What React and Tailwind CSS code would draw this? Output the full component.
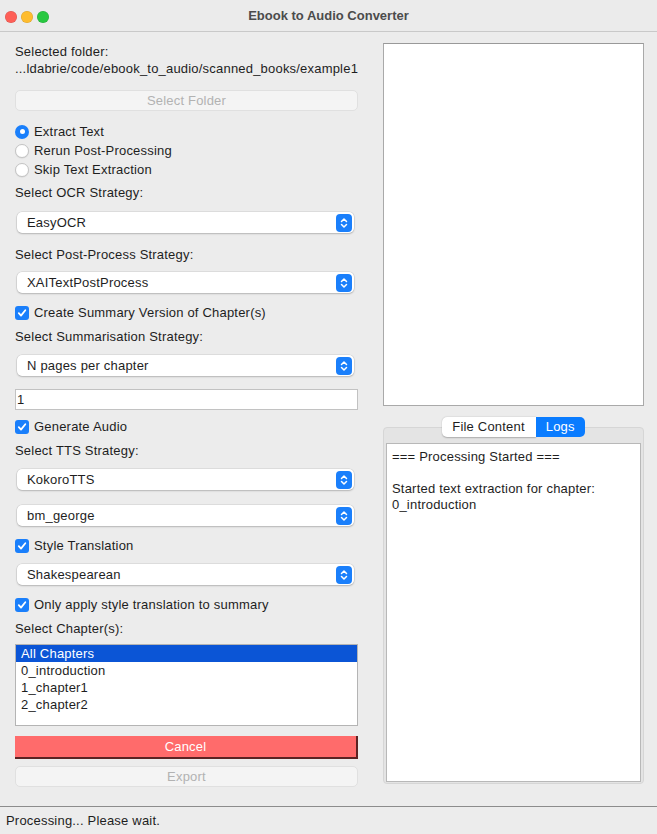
import React from "react";

const font = { fontFamily: '"Liberation Sans", Arial, sans-serif' };

function Stepper() {
  return (
    <div className="flex h-[18px] w-[16px] items-center justify-center rounded-[4px] bg-[#1a7ffb]">
      <svg width="8" height="12" viewBox="0 0 8 12" fill="none">
        <path d="M1.5 4.5 L4 2 L6.5 4.5" stroke="white" strokeWidth="1.5" strokeLinecap="round" strokeLinejoin="round" />
        <path d="M1.5 7.5 L4 10 L6.5 7.5" stroke="white" strokeWidth="1.5" strokeLinecap="round" strokeLinejoin="round" />
      </svg>
    </div>
  );
}

function Select({ value, className = "" }) {
  return (
    <div
      className={`ml-[2px] mr-[4px] flex h-[21px] items-center justify-between rounded-[5px] bg-white pl-[10px] pr-[2px] shadow-[0_0_0_0.5px_rgba(0,0,0,0.12),0_1px_2px_rgba(0,0,0,0.18)] ${className}`}
    >
      <span>{value}</span>
      <Stepper />
    </div>
  );
}

function Check({ label, className = "" }) {
  return (
    <div className={`flex h-[18px] items-center gap-[5px] ${className}`}>
      <div className="flex h-[14px] w-[14px] items-center justify-center rounded-[3px] bg-[#1a7ffb]">
        <svg width="10" height="10" viewBox="0 0 10 10" fill="none">
          <path d="M1.8 5.2 L4 7.6 L8.3 2.2" stroke="white" strokeWidth="1.8" strokeLinecap="round" strokeLinejoin="round" />
        </svg>
      </div>
      <span>{label}</span>
    </div>
  );
}

function Radio({ label, checked }) {
  return (
    <div className="flex h-[19px] items-center gap-[5px]">
      {checked ? (
        <div className="flex h-[14px] w-[14px] items-center justify-center rounded-full bg-[#1a7ffb]">
          <div className="h-[5px] w-[5px] rounded-full bg-white" />
        </div>
      ) : (
        <div className="h-[14px] w-[14px] rounded-full border border-[#c4c4c4] bg-white shadow-[0_0.5px_1px_rgba(0,0,0,0.1)]" />
      )}
      <span>{label}</span>
    </div>
  );
}

function Label({ children, className = "" }) {
  return <div className={`h-[16px] leading-[16px] ${className}`}>{children}</div>;
}

export default function App() {
  const chapters = ["All Chapters", "0_introduction", "1_chapter1", "2_chapter2"];

  return (
    <div style={font} className="flex h-[834px] w-[657px] flex-col overflow-hidden bg-[#ececec] text-[13px] tracking-[0.2px] text-[#1e1e1e]">
      {/* title bar */}
      <div className="relative flex h-[32px] shrink-0 items-center justify-center border-b border-[#c9c9c9] bg-[#ebebeb] pt-[1px]">
        <div className="absolute left-[5px] top-[11px] flex gap-[4px]">
          <div className="h-[12px] w-[12px] rounded-full bg-[#fe5f57] shadow-[inset_0_0_0_0.5px_rgba(0,0,0,0.15)]" />
          <div className="h-[12px] w-[12px] rounded-full bg-[#febc2e] shadow-[inset_0_0_0_0.5px_rgba(0,0,0,0.15)]" />
          <div className="h-[12px] w-[12px] rounded-full bg-[#28c840] shadow-[inset_0_0_0_0.5px_rgba(0,0,0,0.15)]" />
        </div>
        <span className="font-bold tracking-normal text-[#4c4c4c]">Ebook to Audio Converter</span>
      </div>

      <div className="flex flex-1">
        {/* left column */}
        <div className="ml-[15px] flex w-[343px] flex-col pt-[12px]">
          <Label>Selected folder:</Label>
          <Label className="mt-[1px] whitespace-nowrap">...ldabrie/code/ebook_to_audio/scanned_books/example1</Label>
          <div className="mt-[13px] flex h-[21px] items-center justify-center rounded-[5px] border border-[#e0e0e0] bg-[#f4f4f4] text-[#b2b2b2]">
            Select Folder
          </div>

          <div className="mt-[11px]">
            <Radio label="Extract Text" checked />
            <Radio label="Rerun Post-Processing" />
            <Radio label="Skip Text Extraction" />
          </div>

          <Label className="mt-[6px]">Select OCR Strategy:</Label>
          <Select value="EasyOCR" className="mt-[11px]" />

          <Label className="mt-[14px]">Select Post-Process Strategy:</Label>
          <Select value="XAITextPostProcess" className="mt-[9px]" />

          <Check label="Create Summary Version of Chapter(s)" className="mt-[11px]" />
          <Label className="mt-[7px]">Select Summarisation Strategy:</Label>
          <Select value="N pages per chapter" className="mt-[10px]" />

          <div className="mt-[13px] flex h-[21px] items-center border border-[#c2c2c2] bg-white pl-[1px]">1</div>

          <Check label="Generate Audio" className="mt-[8px]" />
          <Label className="mt-[7px]">Select TTS Strategy:</Label>
          <Select value="KokoroTTS" className="mt-[10px]" />
          <Select value="bm_george" className="mt-[15px]" />

          <Check label="Style Translation" className="mt-[11px]" />
          <Select value="Shakespearean" className="mt-[9px]" />

          <Check label="Only apply style translation to summary" className="mt-[11px]" />
          <Label className="mt-[7px]">Select Chapter(s):</Label>

          <div className="mt-[7px] h-[82px] border border-[#b4b4b4] bg-white">
            {chapters.map((c, i) => (
              <div
                key={c}
                className={`h-[17px] pl-[5px] leading-[17px] ${i === 0 ? "bg-[#0b55d6] text-white" : ""}`}
              >
                {c}
              </div>
            ))}
          </div>

          <div className="mt-[10px] flex h-[23px] items-center justify-center border-b-2 border-r-2 border-[#5b2323] bg-[#ff6b6b] text-white">
            Cancel
          </div>
          <div className="mt-[7px] flex h-[21px] items-center justify-center rounded-[5px] border border-[#e0e0e0] bg-[#f4f4f4] text-[#b2b2b2]">
            Export
          </div>
        </div>

        {/* right column */}
        <div className="ml-[25px] flex w-[261px] flex-col pt-[11px]">
          <div className="h-[363px] border border-[#a9a9a9] border-t-[#999] bg-white" />

          <div className="relative z-10 mt-[11px] flex h-[20px] justify-center">
            <div className="flex h-[20px] items-center rounded-l-[5px] bg-white pl-[10px] pr-[11px] shadow-[0_0.5px_1.5px_rgba(0,0,0,0.25)]">
              File Content
            </div>
            <div className="flex h-[20px] items-center rounded-r-[5px] bg-[#0a7cff] px-[10px] text-white">
              Logs
            </div>
          </div>
          <div className="-mt-[10px] h-[357px] rounded-[4px] border border-[#d6d6d6] bg-[#e4e4e4] px-[2px] pb-[2px] pt-[15px]">
            <div className="h-[339px] border border-[#b8b8b8] bg-white px-[5px] pt-[5px] leading-[16px]">
              <div>=== Processing Started ===</div>
              <div className="h-[16px]" />
              <div>Started text extraction for chapter:</div>
              <div>0_introduction</div>
            </div>
          </div>
        </div>
      </div>

      {/* status bar */}
      <div className="flex h-[28px] shrink-0 items-center border-t border-[#8c8c8c] pl-[6px]">
        Processing... Please wait.
      </div>
    </div>
  );
}
